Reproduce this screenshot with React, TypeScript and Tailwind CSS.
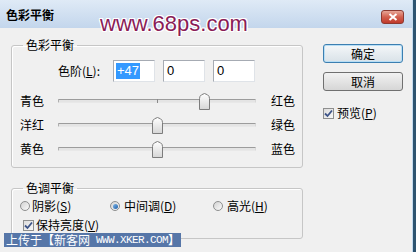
import type { ReactNode } from 'react';

const cjk = "font-['Noto_Sans_CJK_SC','Liberation_Sans',sans-serif]";

function Key({ k }: { k: string }) {
  return <span className="underline underline-offset-1">{k}</span>;
}

function Checkbox() {
  return (
    <div className="flex h-[11px] w-[11px] items-center justify-center border border-[#8e8f8f] bg-gradient-to-br from-[#dcdcdc] to-[#f8f8f8]">
      <svg width="9" height="9" viewBox="0 0 9 9">
        <path d="M1 4.5 L3.5 7 L8 1.5" fill="none" stroke="#3d5488" strokeWidth="1.8" />
      </svg>
    </div>
  );
}

function Radio({ on }: { on?: boolean }) {
  return (
    <div className="flex h-[10px] w-[10px] items-center justify-center rounded-full border border-[#8e8f8f] bg-gradient-to-br from-[#d2d2d2] to-[#fbfbfb]">
      {on && <div className="h-[5px] w-[5px] rounded-full bg-gradient-to-br from-[#7fb6e6] to-[#1b5ea8]" />}
    </div>
  );
}

function Slider({ left, right, value, tick }: { left: string; right: string; value: number; tick?: boolean }) {
  const x = Math.round(((value + 100) / 200) * 198) - 5;
  return (
    <div className="flex h-[24px] items-center pl-[8px]">
      <span className="w-[38px]">{left}</span>
      <div className="relative flex h-[16px] w-[198px] items-center">
        <div className="h-[4px] w-full rounded-[1px] border border-t-[#9c9c9c] border-r-[#d8d8d8] border-b-[#e8e8e8] border-l-[#b0b0b0] bg-[#e4e4e4]" />
        {tick && <div className="absolute left-[99px] top-[6px] h-[4px] w-px bg-[#8a8a8a]" />}
        <svg className="absolute top-0" style={{ left: x }} width="11" height="17" viewBox="0 0 11 17">
          <defs>
            <linearGradient id="th" x1="0" y1="0" x2="0" y2="1">
              <stop offset="0" stopColor="#ffffff" />
              <stop offset="1" stopColor="#d6d6d6" />
            </linearGradient>
          </defs>
          <path d="M0.5 16.5 V5.5 Q0.5 3 2.5 1.8 L5.5 0.5 L8.5 1.8 Q10.5 3 10.5 5.5 V16.5 Z" fill="url(#th)" stroke="#7c7c7c" />
        </svg>
      </div>
      <span className="pl-[15px]">{right}</span>
    </div>
  );
}

function Group({ title, children, className }: { title: string; children: ReactNode; className?: string }) {
  return (
    <fieldset className={`rounded-[3px] border border-[#c6c6c6] shadow-[inset_1px_1px_0_#fff] ${className ?? ''}`}>
      <legend className="ml-[11px] px-[3px] leading-[14px]">{title}</legend>
      {children}
    </fieldset>
  );
}

function NumBox({ value, selected }: { value: string; selected?: boolean }) {
  return (
    <div className="flex h-[22px] w-[42px] items-center border border-[#a6abb3] border-b-[#dfe3e8] border-r-[#dfe3e8] bg-white pl-[2px] font-['Liberation_Sans',sans-serif] text-[13px]">
      {selected ? <span className="bg-[#3399ff] px-px leading-[16px] text-white">{value}</span> : <span className="pl-px">{value}</span>}
    </div>
  );
}

export default function App() {
  return (
    <div className={`relative h-[252px] w-[416px] overflow-hidden border-r-[3px] border-[#2e5470] bg-[#f0f0f0] text-[12px] leading-[14px] text-black ${cjk}`}>
      <div className="h-full border-r border-[#c3daee]">
        <div className="flex h-[28px] items-center justify-between bg-gradient-to-b from-[#dfeaf6] to-[#c3d6ec] pl-[6px] pr-[8px]">
          <span className="mt-[2px] font-bold">色彩平衡</span>
          <div className="mt-[6px] flex h-[14px] w-[23px] items-center justify-center rounded-[3px] border border-[#8d3a31] bg-gradient-to-b from-[#e6a597] via-[#d2604f] to-[#c0392b]">
            <svg width="10" height="8" viewBox="0 0 10 8">
              <path d="M1.5 1 L8.5 7 M8.5 1 L1.5 7" stroke="#fff" strokeWidth="2" />
            </svg>
          </div>
        </div>

        <div className="flex pl-[11px] pt-[10px]">
          <div className="flex w-[292px] flex-col">
            <Group title="色彩平衡" className="pb-[6px]">
              <div className="mt-[8px] flex h-[22px] items-center pl-[46px]">
                <span className="w-[55px]">
                  色阶(<Key k="L" />):
                </span>
                <div className="flex gap-[8px]">
                  <NumBox value="+47" selected />
                  <NumBox value="0" />
                  <NumBox value="0" />
                </div>
              </div>
              <div className="mt-[7px]">
                <Slider left="青色" right="红色" value={47} tick />
                <Slider left="洋红" right="绿色" value={0} />
                <Slider left="黄色" right="蓝色" value={0} />
              </div>
            </Group>

            <Group title="色调平衡" className="mt-[13px] pb-[6px]">
              <div className="mt-[4px] flex h-[14px] items-center pl-[8px]">
                <div className="flex w-[90px] items-center gap-[2px]">
                  <Radio />
                  <span>
                    阴影(<Key k="S" />)
                  </span>
                </div>
                <div className="flex w-[103px] items-center gap-[4px]">
                  <Radio on />
                  <span>
                    中间调(<Key k="D" />)
                  </span>
                </div>
                <div className="flex items-center gap-[4px]">
                  <Radio />
                  <span>
                    高光(<Key k="H" />)
                  </span>
                </div>
              </div>
              <div className="mt-[5px] flex h-[14px] items-center gap-[2px] pl-[11px]">
                <Checkbox />
                <span>
                  保持亮度(<Key k="V" />)
                </span>
              </div>
            </Group>
          </div>

          <div className="ml-[20px] flex w-[80px] flex-col pt-[6px]">
            <button className="h-[19px] rounded-[3px] border border-[#3c7fb1] bg-gradient-to-b from-[#f4f7f9] to-[#d9e2e8] shadow-[inset_0_0_0_1px_#b8def5] leading-[14px]">
              确定
            </button>
            <button className="mt-[9px] h-[19px] rounded-[3px] border border-[#707070] bg-gradient-to-b from-[#f2f2f2] to-[#d6d6d6] leading-[14px]">
              取消
            </button>
            <div className="mt-[15px] flex h-[14px] items-center gap-[3px]">
              <Checkbox />
              <span>
                预览(<Key k="P" />)
              </span>
            </div>
          </div>
        </div>
      </div>

      <div className="absolute left-[100px] top-[13px] font-['Liberation_Sans',sans-serif] text-[22px] leading-[22px] text-[#8a1c57] [text-shadow:1px_0_0_#fff,-1px_0_0_#fff,0_1px_0_#fff,0_-1px_0_#fff,1px_1px_0_#fff,-1px_-1px_0_#fff,1px_-1px_0_#fff,-1px_1px_0_#fff]">
        www.68ps.com
      </div>

      <div className="absolute left-[4px] top-[233px] flex h-[14px] items-center bg-[#5676a8] pl-[2px] pr-[1px] text-[12px] leading-[14px] text-white">
        <span>上传于【新客网</span>
        <span className="pl-[6px] font-['Liberation_Mono',monospace] text-[11px] tracking-[-0.6px]">WWW.XKER.COM</span>
        <span>】</span>
      </div>
    </div>
  );
}
